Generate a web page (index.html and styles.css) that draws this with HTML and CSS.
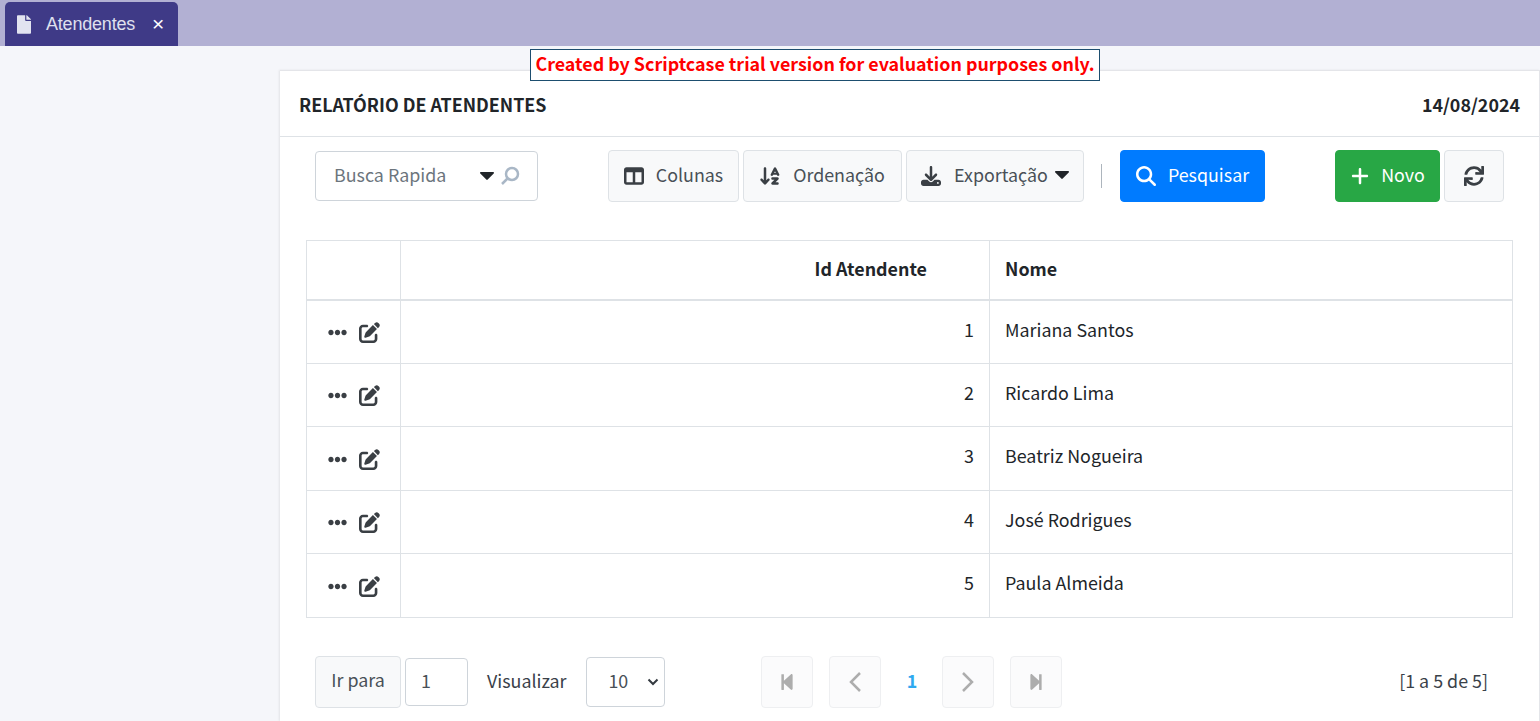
FILE: index.html
```html
<!DOCTYPE html>
<html lang="en">
<head>
    <meta charset="UTF-8">
    <meta name="viewport" content="width=device-width, initial-scale=1.0">
    <title>Atendentes</title>
    <link rel="stylesheet" href="styles.css">
</head>
<body>
    <svg class="sprite" xmlns="http://www.w3.org/2000/svg">
        <symbol id="i-file" viewBox="0 0 384 512"><path d="M224 136V0H24C10.7 0 0 10.7 0 24v464c0 13.3 10.7 24 24 24h336c13.3 0 24-10.7 24-24V160H248c-13.2 0-24-10.8-24-24zm160-14.1v6.1H256V0h6.1c6.4 0 12.5 2.5 17 7l97.9 98c4.5 4.5 7 10.6 7 16.9z"/></symbol>
        <symbol id="i-columns" viewBox="0 0 512 512"><path d="M0 96C0 60.700 28.700 32 64 32H448c35.300 0 64 28.700 64 64V416c0 35.300-28.700 64-64 64H64c-35.300 0-64-28.700-64-64V96zm64 64V416H224V160H64zm384 0H288V416H448V160z"/></symbol>
        <symbol id="i-sort" viewBox="32 0 512 512"><path d="M183.600 469.600C177.500 476.100 169 480 160 480s-17.500-3.900-23.600-10.400l-88-96c-11.900-13-11.100-33.300 2-45.200s33.300-11.100 45.200 2L128 365.700V64c0-17.700 14.300-32 32-32s32 14.300 32 32V365.700l32.400-35.300c11.900-13 32.200-13.900 45.200-2s13.900 32.200 2 45.200l-88 96zM320 320c0-17.700 14.300-32 32-32H480c12.900 0 24.600 7.800 29.600 19.800s2.200 25.700-6.900 34.900L429.300 416H480c17.700 0 32 14.300 32 32s-14.300 32-32 32H352c-12.900 0-24.600-7.800-29.600-19.800s-2.200-25.700 6.900-34.900L402.700 352H352c-17.700 0-32-14.300-32-32zM416 32c12.100 0 23.200 6.800 28.600 17.700l64 128 16 32c7.900 15.800 1.500 35-14.300 42.900s-35 1.500-42.900-14.300L460.200 224H371.800l-7.200 14.300c-7.900 15.800-27.100 22.200-42.900 14.300s-22.200-27.100-14.300-42.900l16-32 64-128C392.800 38.800 403.900 32 416 32zM395.800 176h40.400L416 135.600 395.800 176z"/></symbol>
        <symbol id="i-download" viewBox="0 0 512 512"><path d="M288 32c0-17.700-14.300-32-32-32s-32 14.300-32 32V274.700l-73.400-73.400c-12.500-12.500-32.800-12.500-45.300 0s-12.500 32.800 0 45.300l128 128c12.500 12.500 32.800 12.500 45.300 0l128-128c12.500-12.500 12.500-32.800 0-45.300s-32.800-12.500-45.300 0L288 274.700V32zM64 352c-35.300 0-64 28.700-64 64v32c0 35.300 28.700 64 64 64H448c35.300 0 64-28.700 64-64V416c0-35.300-28.700-64-64-64H346.500l-45.300 45.300c-25 25-65.500 25-90.500 0L165.500 352H64zm368 56a24 24 0 1 1 0 48 24 24 0 1 1 0-48z"/></symbol>
        <symbol id="i-search" viewBox="0 0 512 512"><path d="M416 208c0 45.900-14.900 88.300-40 122.700L502.600 457.400c12.500 12.500 12.500 32.800 0 45.300s-32.800 12.500-45.300 0L330.700 376c-34.400 25.200-76.800 40-122.700 40C93.100 416 0 322.900 0 208S93.100 0 208 0S416 93.100 416 208zM208 352a144 144 0 1 0 0-288 144 144 0 1 0 0 288z"/></symbol>
        <symbol id="i-plus" viewBox="0 0 448 512"><path d="M256 80c0-17.700-14.300-32-32-32s-32 14.300-32 32V224H48c-17.700 0-32 14.300-32 32s14.300 32 32 32H192V432c0 17.700 14.300 32 32 32s32-14.300 32-32V288H400c17.700 0 32-14.300 32-32s-14.300-32-32-32H256V80z"/></symbol>
        <symbol id="i-sync" viewBox="0 0 512 512"><path d="M440.650 12.570l4 82.770A247.160 247.160 0 0 0 255.830 8C134.730 8 33.910 94.920 12.290 209.820A12 12 0 0 0 24.090 224h49.050a12 12 0 0 0 11.670-9.260 175.910 175.910 0 0 1 317-56.940l-101.460-4.860a12 12 0 0 0-12.570 12v47.410a12 12 0 0 0 12 12H500a12 12 0 0 0 12-12V12a12 12 0 0 0-12-12h-47.370a12 12 0 0 0-11.980 12.570zM255.830 432a175.610 175.610 0 0 1-146-77.800l101.800 4.870a12 12 0 0 0 12.570-12v-47.400a12 12 0 0 0-12-12H12a12 12 0 0 0-12 12V500a12 12 0 0 0 12 12h47.350a12 12 0 0 0 12-12.600l-4.150-82.570A247.170 247.170 0 0 0 255.830 504c121.110 0 221.930-86.920 243.550-201.820a12 12 0 0 0-11.800-14.180h-49.050a12 12 0 0 0-11.670 9.260A175.860 175.860 0 0 1 255.830 432z"/></symbol>
        <symbol id="i-dots" viewBox="0 0 512 512"><path d="M328 256c0 39.800-32.200 72-72 72s-72-32.200-72-72 32.200-72 72-72 72 32.200 72 72zm104-72c-39.800 0-72 32.200-72 72s32.200 72 72 72 72-32.200 72-72-32.200-72-72-72zm-352 0c-39.800 0-72 32.200-72 72s32.200 72 72 72 72-32.200 72-72-32.200-72-72-72z"/></symbol>
        <symbol id="i-edit" viewBox="0 0 512 512"><path d="M471.600 21.700c-21.900-21.900-57.300-21.900-79.200 0L362.300 51.700l97.900 97.900 30.100-30.100c21.900-21.900 21.900-57.300 0-79.200L471.600 21.700zm-299.200 220c-6.100 6.100-10.800 13.600-13.500 21.900l-29.600 88.800c-2.900 8.600-.6 18.100 5.800 24.600s15.900 8.700 24.600 5.800l88.800-29.600c8.200-2.700 15.700-7.400 21.900-13.500L437.700 172.300 339.700 74.300 172.400 241.700zM96 64C43 64 0 107 0 160V416c0 53 43 96 96 96H352c53 0 96-43 96-96V320c0-17.700-14.300-32-32-32s-32 14.300-32 32v96c0 17.700-14.300 32-32 32H96c-17.700 0-32-14.300-32-32V160c0-17.700 14.300-32 32-32h96c17.700 0 32-14.300 32-32s-14.300-32-32-32H96z"/></symbol>
        <symbol id="i-first" viewBox="0 0 448 512"><path d="M64 468V44c0-6.600 5.400-12 12-12h48c6.600 0 12 5.400 12 12v176.400l195.500-181C352.100 22.300 384 36.600 384 64v384c0 27.400-31.900 41.700-52.500 24.600L136 292.700V468c0 6.600-5.400 12-12 12H76c-6.600 0-12-5.400-12-12z"/></symbol>
        <symbol id="i-last" viewBox="0 0 448 512"><path d="M384 44v424c0 6.600-5.400 12-12 12h-48c-6.600 0-12-5.400-12-12V291.600l-195.500 181C95.900 489.700 64 475.400 64 448V64c0-27.400 31.900-41.700 52.500-24.600L312 219.300V44c0-6.600 5.400-12 12-12h48c6.600 0 12 5.400 12 12z"/></symbol>
    </svg>

    <div class="tabbar">
        <div class="tab">
            <svg class="tab-icon"><use href="#i-file"/></svg>
            <span class="tab-title">Atendentes</span>
            <span class="tab-close">&times;</span>
        </div>
    </div>

    <div class="trial">Created by Scriptcase trial version for evaluation purposes only.</div>

    <div class="card">
        <div class="card-head">
            <span>RELATÓRIO DE ATENDENTES</span>
            <span>14/08/2024</span>
        </div>

        <div class="toolbar">
            <div class="quick">
                <span class="quick-text">Busca Rapida</span>
                <svg class="caret" viewBox="0 0 14 8"><path d="M1 0h12c.9 0 1.300 1 .7 1.600L7.700 7.600c-.4.4-1 .4-1.400 0L.3 1.600C-.3 1 .1 0 1 0z"/></svg>
                <svg class="quick-glass" viewBox="0 0 20 20"><circle cx="12" cy="8" r="6"/><path d="M7.500 12.500L2 18"/></svg>
            </div>
            <button class="btn btn-cols"><svg class="ico"><use href="#i-columns"/></svg>Colunas</button>
            <button class="btn btn-sort"><svg class="ico"><use href="#i-sort"/></svg>Ordenação</button>
            <button class="btn btn-exp"><svg class="ico"><use href="#i-download"/></svg>Exportação<svg class="caret" viewBox="0 0 14 8"><path d="M1 0h12c.9 0 1.300 1 .7 1.600L7.700 7.600c-.4.4-1 .4-1.400 0L.3 1.600C-.3 1 .1 0 1 0z"/></svg></button>
            <span class="sep"></span>
            <button class="btn btn-blue"><svg class="ico"><use href="#i-search"/></svg>Pesquisar</button>
            <button class="btn btn-green"><svg class="ico"><use href="#i-plus"/></svg>Novo</button>
            <button class="btn btn-sync"><svg class="ico"><use href="#i-sync"/></svg></button>
        </div>

        <table class="grid">
            <colgroup>
                <col class="col-act">
                <col class="col-id">
                <col>
            </colgroup>
            <thead>
                <tr>
                    <th></th>
                    <th class="th-id">Id Atendente</th>
                    <th>Nome</th>
                </tr>
            </thead>
            <tbody>
                <tr>
                    <td class="act"><svg class="dots"><use href="#i-dots"/></svg><svg class="edit"><use href="#i-edit"/></svg></td>
                    <td class="num">1</td>
                    <td>Mariana Santos</td>
                </tr>
                <tr>
                    <td class="act"><svg class="dots"><use href="#i-dots"/></svg><svg class="edit"><use href="#i-edit"/></svg></td>
                    <td class="num">2</td>
                    <td>Ricardo Lima</td>
                </tr>
                <tr>
                    <td class="act"><svg class="dots"><use href="#i-dots"/></svg><svg class="edit"><use href="#i-edit"/></svg></td>
                    <td class="num">3</td>
                    <td>Beatriz Nogueira</td>
                </tr>
                <tr>
                    <td class="act"><svg class="dots"><use href="#i-dots"/></svg><svg class="edit"><use href="#i-edit"/></svg></td>
                    <td class="num">4</td>
                    <td>José Rodrigues</td>
                </tr>
                <tr>
                    <td class="act"><svg class="dots"><use href="#i-dots"/></svg><svg class="edit"><use href="#i-edit"/></svg></td>
                    <td class="num">5</td>
                    <td>Paula Almeida</td>
                </tr>
            </tbody>
        </table>

        <div class="pager">
            <button class="btn btn-goto">Ir para</button>
            <input class="goto-input" type="text" value="1">
            <span class="view-label">Visualizar</span>
            <select class="view-select">
                <option>10</option>
                <option>20</option>
                <option>50</option>
            </select>
            <div class="pages">
                <span class="page-btn"><svg class="page-step"><use href="#i-first"/></svg></span>
                <span class="page-btn"><svg class="page-arrow" viewBox="0 0 14 22"><path d="M12 2L3 11l9 9"/></svg></span>
                <span class="page-num">1</span>
                <span class="page-btn"><svg class="page-arrow" viewBox="0 0 14 22"><path d="M2 2l9 9-9 9"/></svg></span>
                <span class="page-btn"><svg class="page-step"><use href="#i-last"/></svg></span>
            </div>
            <span class="summary">[1 a 5 de 5]</span>
        </div>
    </div>
</body>
</html>
```

FILE: styles.css
```css
html, body {
    height: 100%;
}
body {
    margin: 0;
    overflow: hidden;
    background-color: #f5f6fa;
    font-family: "Noto Sans CJK JP", "Noto Sans", sans-serif;
    font-size: 17.87px;
    line-height: 26px;
    color: #212529;
}
.sprite {
    display: none;
}

/* tab bar */
.tabbar {
    height: 46px;
    padding: 2px 0 0 5px;
    box-sizing: border-box;
    background-color: #b2b0d3;
}
.tab {
    width: 173px;
    height: 44px;
    box-sizing: border-box;
    padding-left: 12px;
    display: flex;
    align-items: center;
    border-radius: 5px 5px 0 0;
    background-color: #3f3a87;
    color: #dfe0ee;
    font-family: "Liberation Sans", Arial, sans-serif;
    font-size: 18px;
}
.tab-icon {
    width: 14px;
    height: 19px;
    fill: #e2e3f0;
}
.tab-title {
    margin-left: 15px;
    letter-spacing: -0.2px;
}
.tab-close {
    margin-left: 17px;
    font-size: 21px;
    color: #fff;
}

/* trial notice */
.trial {
    position: absolute;
    left: 530px;
    top: 49px;
    width: 570px;
    height: 32px;
    box-sizing: border-box;
    border: 1px solid #1d4e6f;
    background-color: #fff;
    color: #f00;
    font-weight: bold;
    line-height: 27px;
    text-align: center;
    white-space: nowrap;
    z-index: 2;
}

/* card */
.card {
    margin: 24px 0 0 280px;
    height: 651px;
    box-sizing: border-box;
    background-color: #fff;
    border: 1px solid #e4e5e9;
    border-left: 0;
    border-bottom: 0;
    box-shadow: -1px 0 2px rgba(0, 0, 0, 0.08);
}
.card-head {
    height: 66px;
    box-sizing: border-box;
    padding: 0 19px 0 19px;
    display: flex;
    align-items: center;
    justify-content: space-between;
    border-bottom: 1px solid #dee2e6;
    font-weight: bold;
}

/* toolbar */
.toolbar {
    height: 52px;
    margin-top: 13px;
    padding-left: 35px;
    display: flex;
    align-items: center;
}
.btn {
    height: 52px;
    box-sizing: border-box;
    padding: 0 0 5px;
    display: flex;
    align-items: center;
    justify-content: center;
    border: 1px solid #dee2e6;
    border-radius: 4px;
    background-color: #f8f9fa;
    color: #495057;
    font-family: inherit;
    font-size: 17.87px;
    line-height: 26px;
}
.ico {
    width: 20px;
    height: 20px;
    margin: 5px 12px 0 0;
    fill: #3a3f44;
}
.quick {
    width: 223px;
    height: 50px;
    box-sizing: border-box;
    padding-left: 18px;
    display: flex;
    align-items: center;
    border: 1px solid #ced4da;
    border-radius: 4px;
    color: #6c757d;
}
.quick-text {
    width: 146px;
    margin-top: -5px;
}
.caret {
    width: 14px;
    height: 8px;
    fill: #212529;
}
.quick-glass {
    width: 20px;
    height: 20px;
    margin-left: 6px;
    fill: none;
    stroke: #a9b7c6;
    stroke-width: 2.500;
}
.btn-cols {
    width: 131px;
    margin-left: 70px;
}
.btn-sort {
    width: 159px;
    margin-left: 4px;
}
.btn-sort .ico {
    margin-right: 13px;
}
.btn-exp {
    width: 178px;
    margin-left: 4px;
}
.btn-exp .ico {
    margin-right: 13px;
}
.btn-exp .caret {
    margin: 2px 0 0 7px;
}
.sep {
    width: 1px;
    height: 24px;
    margin: 0 18px 0 17px;
    background-color: #adb5bd;
}
.btn-blue {
    width: 145px;
    border-color: #007bff;
    background-color: #007bff;
    color: #fff;
}
.btn-green {
    width: 105px;
    margin-left: 70px;
    border-color: #28a745;
    background-color: #28a745;
    color: #fff;
}
.btn-green .ico {
    margin-right: 11px;
}
.btn-blue .ico, .btn-green .ico {
    fill: #fff;
}
.btn-sync {
    width: 60px;
    margin-left: 4px;
}
.btn-sync .ico {
    margin: 5px 0 0;
}

/* table */
.grid {
    width: 1207px;
    margin: 38px 0 0 26px;
    border-collapse: collapse;
    table-layout: fixed;
}
.col-act {
    width: 94px;
}
.col-id {
    width: 589px;
}
th, td {
    box-sizing: border-box;
    padding: 0 15px 6px;
    border: 1px solid #dee2e6;
    text-align: left;
}
th {
    height: 59px;
    padding-bottom: 4px;
    border-bottom-width: 2px;
}
td {
    height: 63.5px;
}
.th-id {
    padding-right: 62px;
    text-align: right;
}
.num {
    text-align: right;
}
td.act {
    padding: 0 0 4px 21px;
}
.dots {
    width: 19px;
    height: 19px;
    fill: #3a3f44;
    vertical-align: middle;
}
.edit {
    width: 21px;
    height: 21px;
    margin-left: 12px;
    fill: #3a3f44;
    vertical-align: middle;
}

/* pager */
.pager {
    height: 52px;
    margin-top: 38px;
    padding-left: 35px;
    display: flex;
    align-items: center;
}
.btn-goto {
    width: 86px;
}
.goto-input {
    width: 63px;
    height: 48px;
    box-sizing: border-box;
    margin-left: 4px;
    padding: 0 15px 3px;
    border: 1px solid #ced4da;
    border-radius: 4px;
    color: #495057;
    font-family: inherit;
    font-size: 17.87px;
}
.view-label {
    margin: -3px 0 0 19px;
    color: #3a4149;
}
.view-select {
    width: 79px;
    height: 50px;
    margin-left: 20px;
    padding: 0 0 3px 21px;
    appearance: none;
    border: 1px solid #ced4da;
    border-radius: 4px;
    background: #fff url("data:image/svg+xml,%3Csvg xmlns='http://www.w3.org/2000/svg' viewBox='0 0 12 8'%3E%3Cpath d='M1.500 1.500L6 6l4.500-4.500' fill='none' stroke='%23343a40' stroke-width='2'/%3E%3C/svg%3E") no-repeat right 5px center / 12px 8px;
    color: #495057;
    font-family: inherit;
    font-size: 17.87px;
}
.pages {
    margin-left: 96px;
    display: flex;
    align-items: center;
}
.page-btn {
    width: 52px;
    height: 52px;
    box-sizing: border-box;
    display: flex;
    align-items: center;
    justify-content: center;
    border: 1px solid #eeeff1;
    border-radius: 4px;
    background-color: #fbfbfc;
    margin-right: 16px;
}
.page-step {
    width: 18px;
    height: 18px;
    fill: #adadad;
}
.page-arrow {
    width: 14px;
    height: 22px;
    fill: none;
    stroke: #adadad;
    stroke-width: 2.500;
}
.page-num {
    width: 61px;
    margin: -3px 0 0 -16px;
    text-align: center;
    color: #2fa9f0;
    font-weight: bold;
}
.summary {
    margin: -3px 51px 0 auto;
    color: #3a4149;
}
```
